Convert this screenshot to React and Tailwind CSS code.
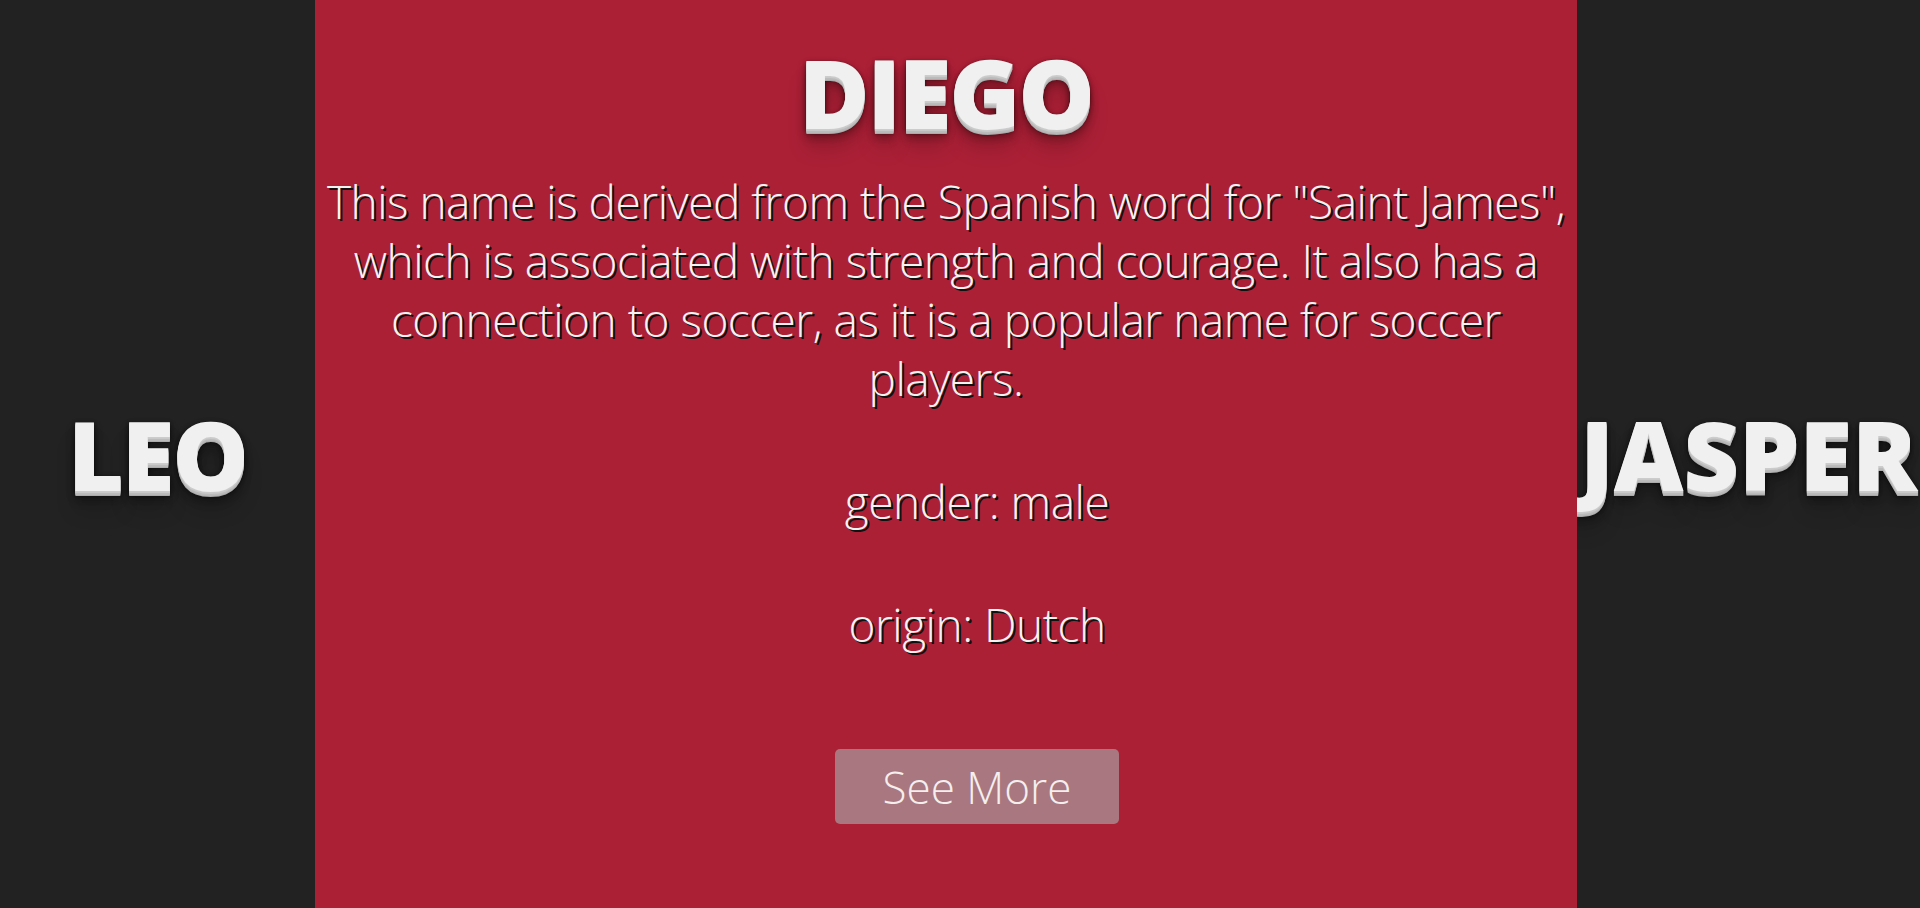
import React from "react";

function Head({ children, className = "" }) {
  return (
    <h2
      className={
        "whitespace-nowrap text-[96px] font-extrabold leading-none tracking-[-2px] text-[#f0f0f0] [text-shadow:0_1px_0_#ccc,0_2px_0_#c9c9c9,0_3px_0_#bbb,0_4px_0_#b9b9b9,0_5px_0_#aaa,0_6px_1px_rgba(0,0,0,.1),0_0_5px_rgba(0,0,0,.1),0_1px_3px_rgba(0,0,0,.3),0_3px_5px_rgba(0,0,0,.2),0_5px_10px_rgba(0,0,0,.25),0_10px_10px_rgba(0,0,0,.2),0_20px_20px_rgba(0,0,0,.15)] " +
        className
      }
    >
      {children}
    </h2>
  );
}

export default function App() {
  return (
    <div className="flex h-[908px] w-[1920px] overflow-hidden font-['Open_Sans','Noto_Sans',sans-serif]">
      <div className="flex w-[315px] shrink-0 items-center justify-center bg-[#222222]">
        <Head>LEO</Head>
      </div>
      <div className="flex w-[1262px] shrink-0 flex-col items-center bg-[#ac2036] pt-[44px] text-[#f7f2f2]">
        <Head>DIEGO</Head>
        <p className="mt-[32px] whitespace-nowrap text-center text-[46px] font-light leading-[59px] tracking-[-0.5px] [text-shadow:2px_2px_0_#111]">
          This name is derived from the Spanish word for "Saint James",
          <br />
          which is associated with strength and courage. It also has a
          <br />
          connection to soccer, as it is a popular name for soccer
          <br />
          players.
        </p>
        <div className="flex flex-col items-center pl-[62px]">
          <p className="mt-[64px] text-[46px] font-light leading-[59px] tracking-[-0.5px] [text-shadow:2px_2px_0_#111]">
            gender: male
          </p>
          <p className="mt-[64px] text-[46px] font-light leading-[59px] tracking-[-0.5px] [text-shadow:2px_2px_0_#111]">
            origin: Dutch
          </p>
          <button className="mt-[95px] flex h-[75px] w-[284px] items-center justify-center rounded-[5px] bg-[#a8777f] text-[44px] font-light text-[#f4eeee]">
            See More
          </button>
        </div>
      </div>
      <div className="flex min-w-0 flex-1 items-center overflow-hidden bg-[#222222] pl-[3px]">
        <Head className="tracking-[0px]">JASPER</Head>
      </div>
    </div>
  );
}
